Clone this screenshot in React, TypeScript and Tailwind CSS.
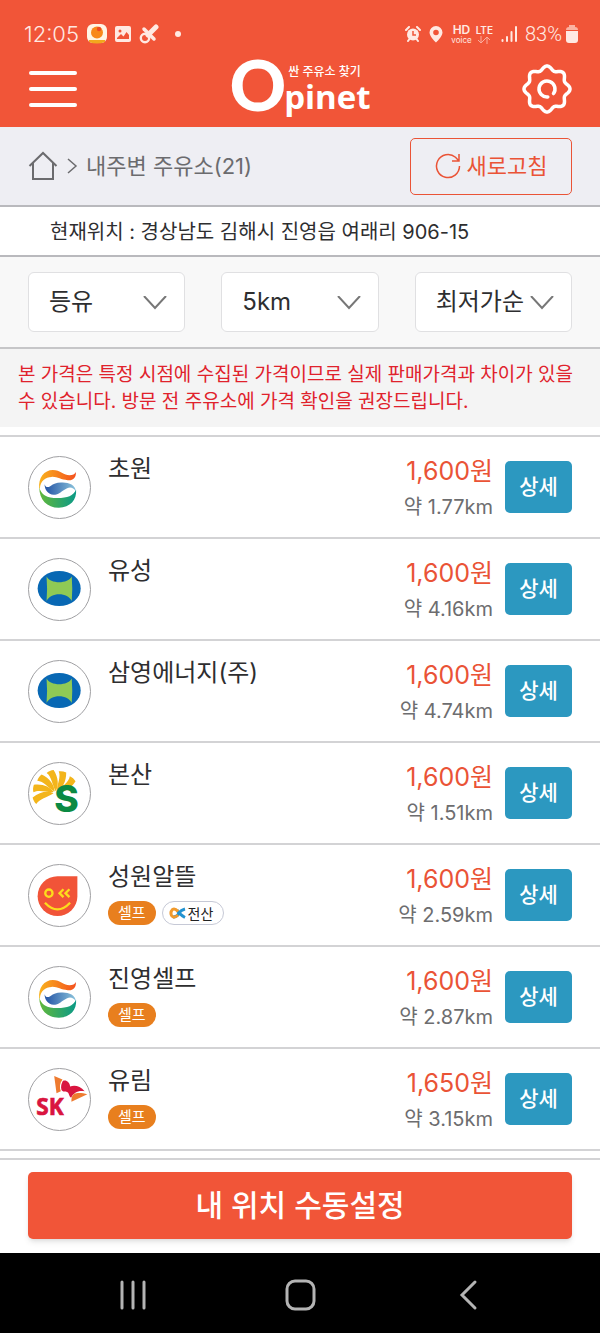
import React from 'react';

type Brand = 'gs' | 'hyundai' | 'soil' | 'alddle' | 'sk';

interface Station {
  id: number;
  name: string;
  brand: Brand;
  price: number;
  distance: string;
  self?: boolean;
  computerized?: boolean;
}

const STATIONS: Station[] = [
  { id: 1, name: '초원', brand: 'gs', price: 1600, distance: '1.77' },
  { id: 2, name: '유성', brand: 'hyundai', price: 1600, distance: '4.16' },
  { id: 3, name: '삼영에너지(주)', brand: 'hyundai', price: 1600, distance: '4.74' },
  { id: 4, name: '본산', brand: 'soil', price: 1600, distance: '1.51' },
  { id: 5, name: '성원알뜰', brand: 'alddle', price: 1600, distance: '2.59', self: true, computerized: true },
  { id: 6, name: '진영셀프', brand: 'gs', price: 1600, distance: '2.87', self: true },
  { id: 7, name: '유림', brand: 'sk', price: 1650, distance: '3.15', self: true },
];

const PETALS = [-20, -52, -84, -116, -148, -180];

// Eight soft lobes around the centre of a 50x50 box
const GEAR_PATH =
  Array.from({ length: 180 }, (_, i) => {
    const a = (i * Math.PI) / 90;
    const r = 21 + 2 * Math.cos(8 * a);
    return `${i === 0 ? 'M' : 'L'}${(25 + r * Math.sin(a)).toFixed(2)} ${(25 - r * Math.cos(a)).toFixed(2)}`;
  }).join('') + 'Z';

function BrandMark({ brand }: { brand: Brand }) {
  switch (brand) {
    case 'gs':
      return (
        <>
          <defs>
            <linearGradient id="gs-orange">
              <stop offset="0" stopColor="#f9b21d" />
              <stop offset="1" stopColor="#f4511e" />
            </linearGradient>
            <linearGradient id="gs-blue">
              <stop offset="0" stopColor="#2353a5" />
              <stop offset="1" stopColor="#8cc4dc" />
            </linearGradient>
            <linearGradient id="gs-green">
              <stop offset="0" stopColor="#62b83a" />
              <stop offset="1" stopColor="#0b9a87" />
            </linearGradient>
          </defs>
          <path d="M57 116C53 84 72 60 98 60C120 60 132 76 148 76C158 76 164 73 167 66C170 82 158 93 143 91C122 90 112 80 94 81C76 82 60 92 59 116Z" fill="url(#gs-orange)" />
          <path d="M73 103C76 112 82 114 90 109C102 101 110 97 128 98C148 99 165 104 168 126C160 112 150 111 141 115C126 122 116 135 100 135C84 134 73 120 73 103Z" fill="url(#gs-blue)" />
          <path d="M57 112C62 134 80 145 112 145C142 145 160 138 168 120C171 150 150 174 116 174C80 174 57 150 57 112Z" fill="url(#gs-green)" />
        </>
      );
    case 'hyundai':
      return (
        <>
          <ellipse cx="117" cy="110" rx="65" ry="53" fill="#0868b4" />
          <path d="M79 74C90 97 144 97 155 74Q158 110 155 148C144 120 90 120 79 148Q82 110 79 74Z" fill="#8fca55" />
        </>
      );
    case 'soil':
      return (
        <>
          {PETALS.map((angle) => (
            <path
              key={angle}
              d="M6 0C24 8 48 4 69 -13C67 -21 64 -27 58 -33C48 -16 26 -14 6 0Z"
              fill="#f3b51b"
              transform={`translate(106 112) rotate(${angle})`}
            />
          ))}
          <text x="102" y="169" fontSize="112" fontWeight="800" fontFamily="Inter, sans-serif" fill="#0b8a43">
            S
          </text>
        </>
      );
    case 'alddle':
      return (
        <>
          <path d="M172 55V115A60 60 0 1 1 112 55Z" fill="#f15438" />
          <g fill="none" stroke="#fcdc1c" strokeWidth="7">
            <circle cx="86" cy="106" r="11" />
            <path d="M130 94l-12 12 12 12M148 94l-12 12 12 12M74 135q38 40 76 0" />
          </g>
        </>
      );
    case 'sk':
      return (
        <>
          <path d="M102 42L127 53C119 64 117 76 122 88L109 94Z" fill="#ee7b30" />
          <path d="M128 57C137 52 149 60 150 74C163 68 180 72 194 88C174 85 161 91 153 108C145 101 148 93 141 90C134 88 130 92 124 84C121 74 124 64 128 57Z" fill="#d9153f" />
          <path d="M162 96C172 91 188 93 202 97L154 120C153 109 156 101 162 96Z" fill="#ee7b30" />
          <text x="48" y="159" fontSize="68" fontWeight="700" fontFamily="'Open Sans', sans-serif" fill="#d9153f" stroke="#d9153f" strokeWidth="2">
            SK
          </text>
        </>
      );
  }
}

function BrandLogo({ brand }: { brand: Brand }) {
  return (
    <div className="w-[63px] h-[63px] rounded-full border border-[#a0a0a3] overflow-hidden shrink-0">
      <svg viewBox="26 21 184 184" className="w-full h-full" aria-hidden="true">
        <BrandMark brand={brand} />
      </svg>
    </div>
  );
}

function StatusBar() {
  return (
    <div className="h-[50px] pt-[18px] pl-6 pr-[22px] flex items-center justify-between text-[#ffe9e2]">
      <div className="flex items-center gap-2">
        <span className="text-[22px] leading-8 font-light">12:05</span>
        <svg className="w-5 h-5" viewBox="0 0 20 20" aria-hidden="true">
          <rect width="20" height="19" rx="6" fill="#fff5e6" />
          <circle cx="10" cy="8.500" r="6" fill="#f8891c" />
          <circle cx="12" cy="5" r="2.200" fill="#ee4b25" />
          <path d="M2 16h16v2q-8 3-16 0Z" fill="#f2a81e" />
        </svg>
        <svg className="w-4 h-4" viewBox="0 0 16 16" aria-hidden="true">
          <rect width="16" height="16" rx="2" fill="currentColor" />
          <circle cx="5" cy="5" r="1.500" fill="#f15538" />
          <path d="M2 12l4-4 2.500 2.500L11.500 6 14 9v4H2Z" fill="#f15538" />
        </svg>
        <svg className="w-5 h-5" viewBox="0 0 20 20" fill="none" stroke="currentColor" strokeLinecap="round" aria-hidden="true">
          <circle cx="6" cy="14" r="4.200" strokeWidth="2.400" />
          <path d="M9 11L17 3" strokeWidth="5" />
          <path d="M5 5l10 10" strokeWidth="3.500" />
        </svg>
        <span className="w-[6px] h-[6px] ml-2 rounded-full bg-[#ffe9e2]" />
      </div>

      <div className="flex items-center gap-2">
        <svg className="w-4 h-4" viewBox="0 0 16 16" aria-hidden="true">
          <path d="M1 4l3-3M15 4l-3-3M3 15l1.500-2M13 15l-1.500-2" stroke="currentColor" strokeWidth="2" strokeLinecap="round" />
          <circle cx="8" cy="8.500" r="6" fill="currentColor" />
          <path d="M8 5v4h3" fill="none" stroke="#f15538" strokeWidth="1.500" />
        </svg>
        <svg className="w-[14px] h-[18px]" viewBox="1 0 14 18" aria-hidden="true">
          <path fillRule="evenodd" fill="currentColor" d="M8 1a6.500 6.500 0 0 1 6.500 6.500C14.500 11.500 8 17.500 8 17.500S1.500 11.500 1.500 7.500A6.500 6.500 0 0 1 8 1Zm0 3.700a2.800 2.800 0 1 0 0 5.600 2.800 2.800 0 0 0 0-5.600Z" />
        </svg>
        <span className="flex flex-col items-center text-[8px] leading-[9px]">
          <b className="text-[12px] leading-3 font-semibold">HD</b>
          <span>voice</span>
        </span>
        <span className="-ml-1 flex flex-col items-center">
          <b className="text-[10px] leading-[11px] font-semibold">LTE</b>
          <svg className="w-[14px] h-2 opacity-60" viewBox="0 0 14 8" fill="none" stroke="currentColor" aria-hidden="true">
            <path d="M4 0v7M1 4l3 3 3-3M10 8V1M7 4l3-3 3 3" />
          </svg>
        </span>
        <svg className="w-4 h-4" viewBox="0 0 16 16" stroke="currentColor" strokeWidth="2" strokeLinecap="round" aria-hidden="true">
          <path d="M1.500 14v1M6 11v4M10.500 6v9M15 1v14" />
        </svg>
        <span className="flex items-center gap-1 font-[Roboto,sans-serif] text-[20px] leading-8 font-light">
          83%
          <svg className="w-3 h-[18px]" viewBox="0 0 12 18" aria-hidden="true">
            <path d="M0 5q0-3 3-3V0h6v2q3 0 3 3Z" fill="#fbb3a2" />
            <path d="M0 6h12v9q0 3-3 3H3q-3 0-3-3Z" fill="currentColor" />
          </svg>
        </span>
      </div>
    </div>
  );
}

function Header() {
  return (
    <header className="bg-[#f15538] text-white">
      <StatusBar />
      <div className="h-[77px] px-7 flex items-center justify-between">
        <button className="w-[50px] h-[50px] px-px flex flex-col justify-center gap-3 cursor-pointer" aria-label="메뉴">
          <span className="h-1 w-full rounded-xs bg-white" />
          <span className="h-1 w-full rounded-xs bg-white" />
          <span className="h-1 w-full rounded-xs bg-white" />
        </button>
        <a href="#home" className="flex h-[60px]">
          <span className="font-[Lato,sans-serif] font-black text-[70px] leading-[50px]">O</span>
          <span className="-ml-[2px] flex flex-col pt-[5px]">
            <span className="pl-1 text-[12px] leading-4 font-medium">싼 주유소 찾기</span>
            <span className="font-['Open_Sans',sans-serif] font-bold text-[33px] leading-[34px]">pinet</span>
          </span>
        </a>
        <button className="cursor-pointer" aria-label="설정">
          <svg className="w-[50px] h-[50px]" viewBox="0 0 50 50" fill="none" stroke="currentColor" strokeWidth="3.500" aria-hidden="true">
            <path d={GEAR_PATH} strokeLinejoin="round" />
            <path d="M25.800 32.900A8 8 0 1 1 31.500 29.600" strokeLinecap="round" />
          </svg>
        </button>
      </div>
    </header>
  );
}

interface FilterSelectProps {
  label: string;
  options: string[];
}

function FilterSelect({ label, options }: FilterSelectProps) {
  return (
    <div className="relative">
      <select
        aria-label={label}
        className="appearance-none w-full h-[60px] pl-5 pr-10 rounded-md border border-[#e0e0e2] bg-white text-[24px] leading-10 text-[#2e2e30] cursor-pointer"
      >
        {options.map((option) => (
          <option key={option}>{option}</option>
        ))}
      </select>
      <svg className="absolute right-4 top-6 w-7 h-4 pointer-events-none" viewBox="0 0 28 16" fill="none" stroke="#777" strokeWidth="2" aria-hidden="true">
        <path d="M3 0L14 12L25 0" />
      </svg>
    </div>
  );
}

function StationRow({ station }: { station: Station }) {
  return (
    <li className="h-[102px] px-7 flex items-center border-b-2 border-[#d3d3d5]">
      <BrandLogo brand={station.brand} />
      <div className="flex-1 self-stretch pl-[17px] pt-4">
        <h2 className="text-[24px] leading-8 text-[#2e2e30]">{station.name}</h2>
        <div className="mt-2 flex gap-[6px]">
          {station.self && (
            <span className="h-6 px-[10px] rounded-full bg-[#e87f1e] text-white text-[15px] leading-6">셀프</span>
          )}
          {station.computerized && (
            <span className="h-6 pl-[6px] pr-[10px] flex items-center gap-px rounded-full border border-[#c6c9d6] text-[14px] text-[#222]">
              <svg className="w-[18px] h-3" viewBox="0 0 18 12" fill="none" strokeWidth="3" aria-hidden="true">
                <path d="M4 10Q8 10 10 6Q12 3 16 2M8 3Q11 8 16 10.500" stroke="#2292d0" />
                <path d="M9 8Q5 12 2.500 8.500Q1 5 3.500 2.500Q6 1 9 4.500" stroke="#f19a2c" />
              </svg>
              전산
            </span>
          )}
        </div>
      </div>
      <div className="pt-1 text-right">
        <p className="text-[25px] leading-9 text-[#ea5336]">{station.price.toLocaleString('en-US')}원</p>
        <p className="text-[20px] leading-9 text-[#6d6d6f]">약 {station.distance}km</p>
      </div>
      <button className="ml-3 w-[67px] h-[52px] rounded-[5px] bg-[#2c98c0] text-white text-[21px] font-medium cursor-pointer">
        상세
      </button>
    </li>
  );
}

export default function App() {
  return (
    <div className="min-h-screen flex flex-col bg-white font-[Inter,'Noto_Sans_CJK_KR',sans-serif]">
      <Header />

      {/* Breadcrumb */}
      <div className="h-20 px-7 flex items-center justify-between bg-[#eeeef3] border-b-2 border-[#b9b9bd]">
        <nav className="flex items-center gap-2 text-[22px] text-[#6b6b6e]">
          <a href="#home" aria-label="홈">
            <svg className="w-[30px] h-[30px]" viewBox="0 0 30 30" fill="none" stroke="currentColor" strokeWidth="2" aria-hidden="true">
              <path d="M1.500 15L15 2L28.500 15M5 12V28H25V12" />
            </svg>
          </a>
          <svg className="w-3 h-4" viewBox="0 0 12 16" fill="none" stroke="currentColor" strokeWidth="1.500" aria-hidden="true">
            <path d="M2 1L10 8L2 15" />
          </svg>
          <span>내주변 주유소(21)</span>
        </nav>
        <button className="w-[162px] h-[57px] flex items-center justify-center gap-[6px] rounded-[5px] border border-[#ea5336] text-[22px] text-[#ea5336] cursor-pointer">
          <svg className="w-[26px] h-[26px]" viewBox="0 0 26 26" fill="none" stroke="currentColor" strokeWidth="1.500" aria-hidden="true">
            <path d="M24.500 13A11.500 11.500 0 1 1 20.500 4.300L23.500 7.500M24 1V8H17" />
          </svg>
          새로고침
        </button>
      </div>

      <p className="h-[50px] pl-[50px] border-b-2 border-[#b9b9bd] text-[20px] leading-[50px] text-[#2e2e30]">
        현재위치 : 경상남도 김해시 진영읍 여래리 906-15
      </p>

      {/* Filters */}
      <div className="px-7 py-[15px] grid grid-cols-3 gap-9 bg-[#f8f8f8] border-b-2 border-[#c6c6c8]">
        <FilterSelect label="유종" options={['등유', '휘발유', '경유']} />
        <FilterSelect label="반경" options={['5km', '3km', '1km']} />
        <FilterSelect label="정렬" options={['최저가순', '거리순']} />
      </div>

      <p className="pl-[18px] pr-2 pt-3 pb-3 bg-[#f4f4f4] text-[19px] leading-[27px] text-[#e0222c]">
        본 가격은 특정 시점에 수집된 가격이므로 실제 판매가격과 차이가 있을 수 있습니다. 방문 전 주유소에 가격 확인을 권장드립니다.
      </p>

      {/* Station list */}
      <ul className="mt-2 border-t-2 border-[#d3d3d5]">
        {STATIONS.map((station) => (
          <StationRow key={station.id} station={station} />
        ))}
      </ul>

      <div className="mt-[7px] px-7 pt-3 pb-[14px] border-t-2 border-[#d3d3d5]">
        <button className="w-full h-[67px] rounded-[5px] bg-[#f15538] text-white text-[30px] font-medium shadow-md cursor-pointer">
          내 위치 수동설정
        </button>
      </div>

      {/* System navigation */}
      <nav className="h-20 mt-auto px-[117px] pt-1 flex items-center justify-between bg-black text-[#b4b4b4]">
        <button aria-label="최근 앱" className="cursor-pointer">
          <svg className="w-8 h-8" viewBox="0 0 32 32" stroke="currentColor" strokeWidth="3" strokeLinecap="round" aria-hidden="true">
            <path d="M5 3V29M16 3V29M27 3V29" />
          </svg>
        </button>
        <button aria-label="홈 화면" className="cursor-pointer">
          <svg className="w-8 h-9" viewBox="0 0 32 36" fill="none" stroke="currentColor" strokeWidth="3" aria-hidden="true">
            <rect x="3" y="4" width="27" height="28" rx="8" />
          </svg>
        </button>
        <button aria-label="뒤로" className="cursor-pointer">
          <svg className="w-8 h-8" viewBox="0 0 32 32" fill="none" stroke="currentColor" strokeWidth="3" strokeLinecap="round" aria-hidden="true">
            <path d="M24 3L11 16L24 29" />
          </svg>
        </button>
      </nav>
    </div>
  );
}
